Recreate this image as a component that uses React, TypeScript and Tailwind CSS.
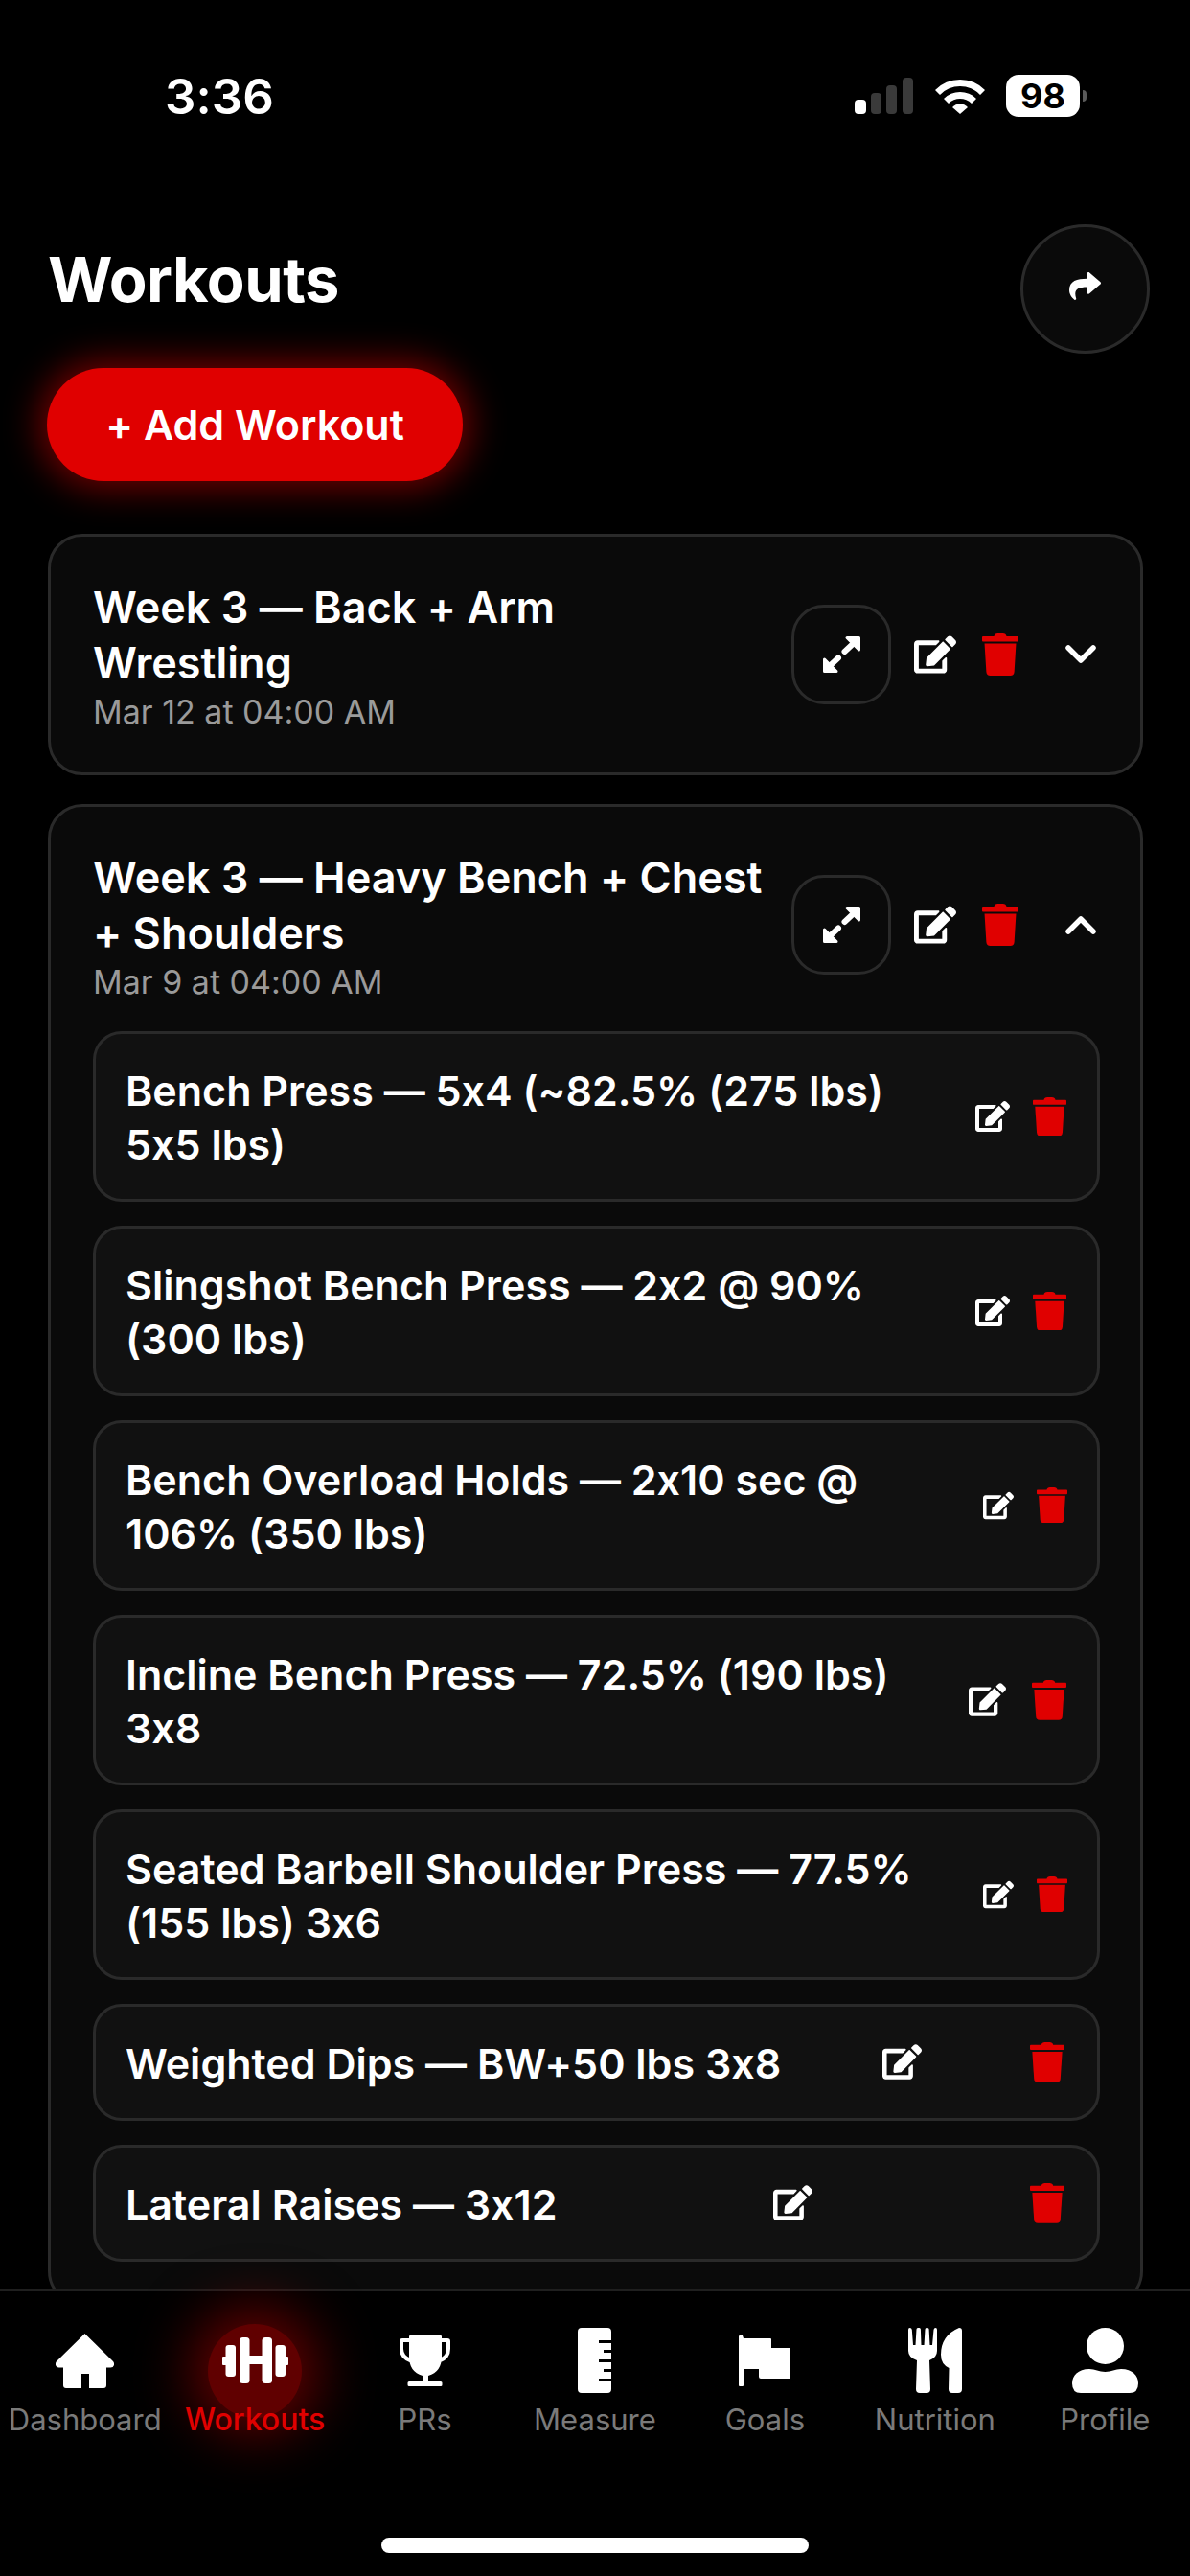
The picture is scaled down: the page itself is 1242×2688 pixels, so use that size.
import React from "react";
import { FaShare, FaEdit } from "react-icons/fa";

const font = "font-['Inter','Roboto',sans-serif] [font-feature-settings:'calt'_0]";

function Trash({ size }: { size: number }) {
  return (
    <svg width={size} height={(size * 44) / 38} viewBox="0 0 38 44" fill="#e00000" className="shrink-0">
      <path d="M12.5 3 Q13 0 16.5 0 H21.5 Q25 0 25.5 3 H37 Q38 3 38 4 V7.5 Q38 8.5 37 8.5 H1 Q0 8.5 0 7.5 V4 Q0 3 1 3 Z" />
      <path d="M2.5 10.5 H35.5 L33.6 40 Q33.3 44 29.5 44 H8.5 Q4.7 44 4.4 40 Z" />
    </svg>
  );
}

function Expand() {
  return (
    <svg width="39" height="38" viewBox="0 0 39 38" fill="#fff" stroke="#fff" strokeLinejoin="round">
      <path d="M25 1.5 H37.5 V14 Z" strokeWidth="3" />
      <path d="M1.5 24 V36.5 H14 Z" strokeWidth="3" />
      <path d="M30 9 L22.5 16 M9 29 L16 22.5" strokeWidth="6" strokeLinecap="round" fill="none" />
    </svg>
  );
}

function Chevron({ up }: { up?: boolean }) {
  return (
    <svg width="32" height="20" viewBox="0 0 32 20" fill="none" stroke="#fff" strokeWidth="5.5" strokeLinecap="round" strokeLinejoin="round">
      <path d={up ? "M3 17 L16 4 L29 17" : "M3 3 L16 16 L29 3"} />
    </svg>
  );
}

function WorkoutCard({ title, date, up, children }: { title: React.ReactNode; date: string; up?: boolean; children?: React.ReactNode }) {
  return (
    <div className="rounded-[36px] border-[3px] border-[#2a2a2a] bg-[#0a0a0a] pl-[44px] pr-[42px] py-[43px]">
      <div className="flex items-center">
        <div className="w-[729px] shrink-0 pt-[2px] -mb-[2px]">
          <div className="text-[45px] leading-[58px] font-semibold text-white">{title}</div>
          <div className="text-[34px] leading-[44px] text-[#9a9a9a]">{date}</div>
        </div>
        <div className="flex items-center">
          <div className="w-[104px] h-[104px] rounded-[34px] border-[3px] border-[#2a2a2a] flex items-center justify-center">
            <Expand />
          </div>
          <FaEdit color="#fff" size={44} className="ml-[24px]" />
          <div className="ml-[27px]"><Trash size={38} /></div>
          <div className="ml-[49px] mr-[3px]"><Chevron up={up} /></div>
        </div>
      </div>
      {children}
    </div>
  );
}

function Row({ text, actionWidth, edit = 36, trash = 35, gap = 24, pad = 32 }: { text: React.ReactNode; actionWidth?: number; edit?: number; trash?: number; gap?: number; pad?: number }) {
  return (
    <div className="flex items-center rounded-[30px] border-[3px] border-[#2a2a2a] bg-[#111111] pl-[31px]" style={{ paddingRight: pad }}>
      <div className="pt-[31px] pb-[29px] flex-1 text-[43px] leading-[56px] font-semibold text-white whitespace-nowrap">{text}</div>
      {actionWidth !== undefined ? (
        <div className="flex items-center justify-between shrink-0" style={{ width: actionWidth }}>
          <FaEdit color="#fff" size={edit} />
          <Trash size={trash} />
        </div>
      ) : (
        <div className="flex items-center shrink-0" style={{ gap }}>
          <FaEdit color="#fff" size={edit} />
          <Trash size={trash} />
        </div>
      )}
    </div>
  );
}

function Home() {
  return (
    <svg width="61" height="57" viewBox="0 0 61 57" fill="#fff">
      <path d="M30.5 0 L60 29 Q61.5 31 61 33 Q60 36 56.5 35.5 L53 35.5 V54 Q53 57 50 57 H35 V42 H27 V57 H11 Q8 57 8 54 V35.5 L4.5 35.5 Q1 36 0 33 Q-0.5 31 1 29 Z" />
    </svg>
  );
}

function Dumbbell() {
  return (
    <svg width="69" height="48" viewBox="0 0 69 48" fill="#fff">
      <rect x="0" y="20" width="5" height="9" rx="1" />
      <rect x="3.5" y="8" width="10.5" height="33" rx="3" />
      <rect x="18" y="0" width="10.5" height="48" rx="3.5" />
      <rect x="28" y="19" width="14" height="9" />
      <rect x="41.5" y="0" width="10.5" height="48" rx="3.5" />
      <rect x="55.5" y="8" width="10.5" height="33" rx="3" />
      <rect x="64" y="20" width="5" height="9" rx="1" />
    </svg>
  );
}

function Trophy() {
  return (
    <svg width="53" height="53" viewBox="0 0 53 53" fill="#fff">
      <path d="M10 1 Q10 0 11 0 H43 Q44 0 44 1 V3 H50 Q53 3 53 6 V14 Q53 24 43 28 L41.5 24 Q49 21 49 14 V7 H44 V22 Q44 38 30 42 V48 H43 Q44.5 48 44.5 49.5 V51.5 Q44.5 53 43 53 H10 Q8.5 53 8.5 51.5 V49.5 Q8.5 48 10 48 H24 V42 Q10 38 10 22 V7 H4 V14 Q4 21 12 24 L10.5 28 Q0 24 0 14 V6 Q0 3 3 3 H10 Z" />
    </svg>
  );
}

function Ruler() {
  return (
    <svg width="35" height="68" viewBox="0 0 35 68" fill="#fff">
      <path d="M4 0 H31 Q35 0 35 4 V13 H22 V16 H35 V23 H27 V26 H35 V33 H22 V36 H35 V43 H27 V46 H35 V53 H22 V56 H35 V64 Q35 68 31 68 H4 Q0 68 0 64 V4 Q0 0 4 0 Z" />
    </svg>
  );
}

function Flag() {
  return (
    <svg width="54" height="53" viewBox="0 0 54 53" fill="#fff">
      <path d="M1 0 H4 L5 3 H33 Q34 3 34 4 V13 H53 Q54 13 54 14 V44 Q54 45 53 45 H23 Q21 45 21 43 V35 H5 V52 Q5 53 4 53 H1 Q0 53 0 52 V1 Q0 0 1 0 Z" />
    </svg>
  );
}

function Cutlery() {
  return (
    <svg width="56" height="68" viewBox="0 0 56 68" fill="#fff">
      <path d="M1.5 0 Q3.5 0 3.8 2 L5 18 H7.5 L8.5 1.5 Q8.6 0 10 0 H11.5 Q12.8 0 12.9 1.5 L13.5 18 H16.5 L17.5 1.5 Q17.6 0 19 0 H20 Q21.5 0 21.6 1.5 L22.5 18 H25 L26.5 2 Q26.8 0 28.5 0 Q30 0 30 2 V24 Q30 31 22 34 L23 64 Q23 68 19 68 H12 Q8 68 8 64 L9 34 Q0 31 0 24 V2 Q0 0 1.5 0 Z" />
      <path d="M53 0 Q56 0 56 3 V64 Q56 68 52 68 H46 Q42 68 42 64 L42.5 42 Q34 38 34 28 Q34 8 53 0 Z" />
    </svg>
  );
}

function Person() {
  return (
    <svg width="69" height="68" viewBox="0 0 69 68" fill="#fff">
      <ellipse cx="34.5" cy="19" rx="19.5" ry="19" />
      <path d="M0 58 C0 50 6 43 18 43 C24 43 28 46 34.5 46 C41 46 45 43 51 43 C63 43 69 50 69 58 Q69 68 60 68 H9 Q0 68 0 58 Z" />
    </svg>
  );
}

function NavItem({ icon, label, active }: { icon: React.ReactNode; label: string; active?: boolean }) {
  return (
    <div className="flex-1 flex flex-col items-center relative">
      {active && <div className="absolute -top-[4px] w-[98px] h-[98px] rounded-full bg-[#600000] shadow-[0_0_60px_16px_rgba(170,0,0,0.6)]" />}
      <div className="relative h-[68px] flex items-center justify-center">{icon}</div>
      <div className={`relative mt-[10px] leading-[36px] whitespace-nowrap ${active ? "text-[32px] text-[#e00000] font-medium" : "text-[31px] text-[#7a7a7a]"}`}>{label}</div>
    </div>
  );
}

export default function App() {
  return (
    <div className={`w-[1242px] h-[2688px] bg-black relative overflow-hidden flex flex-col ${font}`}>
      <div className="h-[2388px] overflow-hidden flex flex-col shrink-0">
        {/* status bar */}
        <div className="h-[234px] shrink-0 flex items-start pt-[70px] pl-[172px] pr-[108px] justify-between">
          <div className="text-[51px] leading-[62px] font-semibold text-white">3:36</div>
          <div className="flex items-center gap-[22px] mt-[8px]">
            <svg width="62" height="38" viewBox="0 0 62 38">
              <rect x="0" y="23" width="12" height="15" rx="4" fill="#fff" />
              <rect x="17" y="16" width="11" height="22" rx="4" fill="#3a3a3a" />
              <rect x="33" y="8" width="11" height="30" rx="4" fill="#3a3a3a" />
              <rect x="50" y="0" width="11" height="38" rx="4" fill="#3a3a3a" />
            </svg>
            <svg width="52" height="38" viewBox="0 0 52 38">
              <path d="M0 13 A36 36 0 0 1 52 13 L47 18 A29 29 0 0 0 5 18 Z" fill="#fff" />
              <path d="M9 22 A24 24 0 0 1 43 22 L38 27 A17 17 0 0 0 14 27 Z" fill="#fff" />
              <path d="M18 31 A11 11 0 0 1 34 31 L26 38 Z" fill="#fff" />
            </svg>
            <div className="flex items-center gap-[3px]">
              <div className="w-[77px] h-[44px] rounded-[13px] bg-white flex items-center justify-center text-[36px] font-bold text-black leading-none">98</div>
              <div className="w-[4px] h-[12px] rounded-r-full bg-[#5a5a5a]" />
            </div>
          </div>
        </div>
        {/* header */}
        <div className="flex items-start justify-between pl-[50px] pr-[42px] shrink-0">
          <div className="text-[65px] leading-[72px] font-bold text-white tracking-[-0.5px] mt-[22px]">Workouts</div>
          <div className="w-[135px] h-[135px] rounded-full border-[3px] border-[#2a2a2a] bg-[#0a0a0a] flex items-center justify-center">
            <FaShare color="#fff" size={33} className="mb-[6px]" />
          </div>
        </div>
        <div className="pl-[49px] mt-[15px] shrink-0">
          <div className="w-[434px] h-[118px] rounded-full bg-[#e00000] shadow-[0_0_36px_8px_rgba(224,0,0,0.5)] flex items-center justify-center text-[43px] font-semibold text-white">+ Add Workout</div>
        </div>
        <div className="pl-[50px] pr-[49px] mt-[55px] flex flex-col gap-[30px]">
          <WorkoutCard title={<>Week 3 — Back + Arm<br />Wrestling</>} date="Mar 12 at 04:00 AM" />
          <WorkoutCard up title={<>Week 3 — Heavy Bench + Chest<br />+ Shoulders</>} date="Mar 9 at 04:00 AM">
            <div className="mt-[31px] flex flex-col gap-[25px]">
              <Row text={<>Bench Press — 5x4 (~82.5% (275 lbs)<br />5x5 lbs)</>} />
              <Row text={<>Slingshot Bench Press — 2x2 @ 90%<br />(300 lbs)</>} />
              <Row edit={32} trash={32} gap={24} pad={31} text={<>Bench Overload Holds — 2x10 sec @<br />106% (350 lbs)</>} />
              <Row edit={39} trash={36} gap={27} text={<>Incline Bench Press — 72.5% (190 lbs)<br />3x8</>} />
              <Row edit={32} trash={32} gap={24} pad={31} text={<>Seated Barbell Shoulder Press — 77.5%<br />(155 lbs) 3x6</>} />
              <Row actionWidth={190} edit={41} trash={36} pad={34} text="Weighted Dips — BW+50 lbs 3x8" />
              <Row actionWidth={304} edit={41} trash={36} pad={34} text="Lateral Raises — 3x12" />
            </div>
          </WorkoutCard>
        </div>
      </div>
      {/* nav */}
      <div className="relative flex-1 border-t-[3px] border-[#1f1f1f] bg-black pt-[38px] flex">
        <NavItem label="Dashboard" icon={<Home />} />
        <NavItem active label="Workouts" icon={<Dumbbell />} />
        <NavItem label="PRs" icon={<Trophy />} />
        <NavItem label="Measure" icon={<Ruler />} />
        <NavItem label="Goals" icon={<Flag />} />
        <NavItem label="Nutrition" icon={<Cutlery />} />
        <NavItem label="Profile" icon={<Person />} />
        <div className="absolute left-[398px] top-[257px] w-[446px] h-[16px] rounded-full bg-white" />
      </div>
    </div>
  );
}
